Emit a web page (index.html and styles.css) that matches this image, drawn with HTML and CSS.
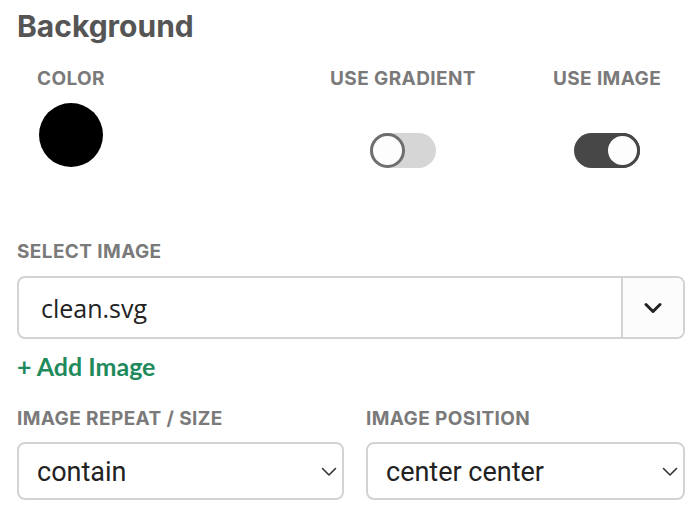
FILE: index.html
```html
<!DOCTYPE html>
<html>
<head>
<title>Background settings</title>
<link rel="stylesheet" href="styles.css">
</head>
<body>
<div class="panel">
  <h2 class="title">Background</h2>

  <div class="options">
    <div class="option option-color">
      <div class="label">COLOR</div>
      <div class="swatch"></div>
    </div>
    <div class="option option-gradient">
      <div class="label">USE GRADIENT</div>
      <div class="toggle"><span class="knob"></span></div>
    </div>
    <div class="option option-image">
      <div class="label">USE IMAGE</div>
      <div class="toggle on"><span class="knob"></span></div>
    </div>
  </div>

  <div class="label field-label">SELECT IMAGE</div>
  <div class="combo">
    <div class="combo-value">clean.svg</div>
    <div class="combo-button">
      <svg width="18" height="12" viewBox="0 0 18 12"><path d="M2 2.5l7 7 7-7" fill="none" stroke="#222" stroke-width="3" stroke-linecap="round" stroke-linejoin="round"/></svg>
    </div>
  </div>
  <a class="add-link">+ Add Image</a>

  <div class="pair">
    <div>
      <div class="label">IMAGE REPEAT / SIZE</div>
      <div class="select">
        <span>contain</span>
        <svg width="16" height="10" viewBox="0 0 16 10"><path d="M1.5 1.5l6.5 6.5 6.5-6.5" fill="none" stroke="#333" stroke-width="1.6" stroke-linecap="round" stroke-linejoin="round"/></svg>
      </div>
    </div>
    <div>
      <div class="label">IMAGE POSITION</div>
      <div class="select">
        <span>center center</span>
        <svg width="16" height="10" viewBox="0 0 16 10"><path d="M1.5 1.5l6.5 6.5 6.5-6.5" fill="none" stroke="#333" stroke-width="1.6" stroke-linecap="round" stroke-linejoin="round"/></svg>
      </div>
    </div>
  </div>
</div>
</body>
</html>
```

FILE: styles.css
```css
body {
  margin: 0;
  background-color: #fff;
  font-family: "Inter", "Liberation Sans", sans-serif;
}

.panel {
  width: 668px;
  padding: 11px 0 0 17px;
}

.title {
  margin: 0;
  font-size: 30px;
  line-height: 30px;
  font-weight: 700;
  color: #555;
}

.label {
  font-size: 19px;
  line-height: 18px;
  font-weight: 700;
  letter-spacing: 0.4px;
  color: #7a7a7a;
  white-space: nowrap;
}

.options {
  display: flex;
  margin-top: 29px;
  height: 98px;
}

.option {
  display: flex;
  flex-direction: column;
  align-items: center;
}

.option-color {
  width: 108px;
}

.option-gradient {
  width: 186px;
  margin-left: 185px;
}

.option-image {
  width: 148px;
  margin-left: 37px;
}

.swatch {
  width: 64px;
  height: 64px;
  margin-top: 15px;
  border-radius: 50%;
  background-color: #000;
}

.toggle {
  width: 66px;
  height: 35px;
  margin-top: 45px;
  border-radius: 18px;
  background-color: #d6d6d6;
  display: flex;
  justify-content: flex-start;
}

.knob {
  width: 35px;
  height: 35px;
  box-sizing: border-box;
  border: 3px solid #6e6e6e;
  border-radius: 50%;
  background-color: #fdfdfd;
}

.toggle.on {
  background-color: #474747;
  justify-content: flex-end;
}

.toggle.on .knob {
  border-color: #474747;
}

.field-label {
  margin-top: 75px;
}

.combo {
  display: flex;
  height: 63px;
  margin-top: 15px;
  box-sizing: border-box;
  border: 2px solid #d3d3d3;
  border-radius: 8px;
}

.combo-value {
  flex: 1;
  display: flex;
  align-items: center;
  padding-left: 22px;
  font-family: "Open Sans", "Liberation Sans", sans-serif;
  font-size: 25px;
  color: #222;
}

.combo-button {
  width: 60px;
  display: flex;
  align-items: center;
  justify-content: center;
  border-left: 2px solid #d3d3d3;
  background-color: #fcfcfc;
  border-radius: 0 6px 6px 0;
}

.add-link {
  display: block;
  margin-top: 13px;
  font-family: "Lato", "Liberation Sans", sans-serif;
  font-size: 25px;
  line-height: 28px;
  font-weight: 700;
  color: #1f8a5c;
}

.pair {
  display: grid;
  grid-template-columns: 327px 319px;
  column-gap: 22px;
  margin-top: 30px;
}

.select {
  display: flex;
  align-items: center;
  justify-content: space-between;
  height: 58px;
  margin-top: 14px;
  padding: 2px 5px 0 18px;
  box-sizing: border-box;
  border: 2px solid #d3d3d3;
  border-radius: 8px;
  font-family: "Roboto", "Liberation Sans", sans-serif;
  font-size: 27px;
  color: #222;
}
```
